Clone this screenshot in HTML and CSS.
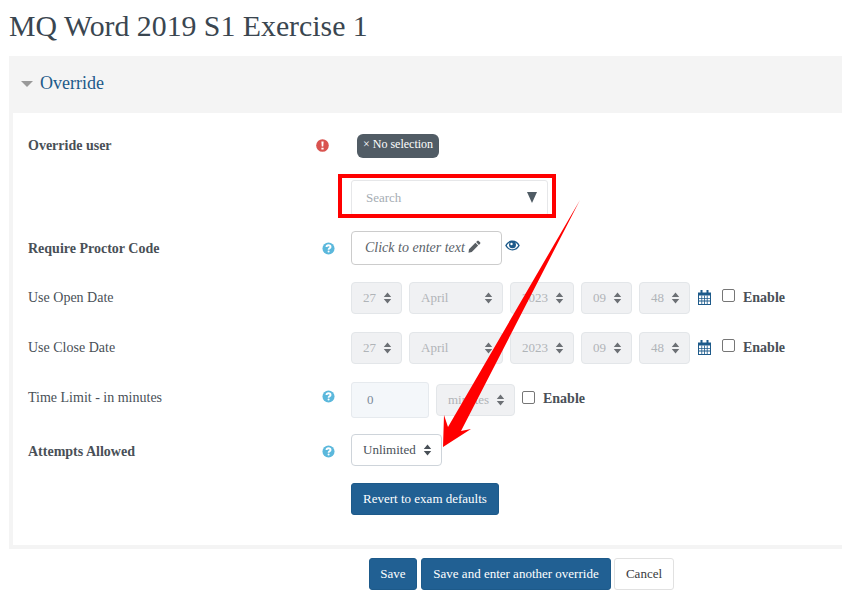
FILE: index.html
```html
<!DOCTYPE html>
<html lang="en">
<head>
<meta charset="utf-8">
<title>MQ Word 2019 S1 Exercise 1</title>
<link rel="stylesheet" href="styles.css">
</head>
<body>
<svg class="defs" aria-hidden="true">
  <symbol id="sort" viewBox="0 0 9 12"><path d="M.8 5 4.500.5 8.200 5zM.8 7h7.400l-3.700 4.500z"/></symbol>
  <symbol id="help" viewBox="0 0 14 14"><circle cx="7" cy="7" r="6.500"/><path class="glyph-line" d="M4.800 5.400c.1-1.300 1-1.900 2.200-1.900 1.300 0 2.200.8 2.200 1.800 0 1.500-2.100 1.600-2.100 3"/><circle class="glyph" cx="7.100" cy="10.300" r="1.100"/></symbol>
  <symbol id="cal" viewBox="0 0 13 15"><path d="M0 2.500h13V15H0z"/><path class="glyph" d="M1 5.500h11V14H1z"/><path d="M1 8h11v.8H1zM1 10.600h11v.8H1zM3.400 5.500h.8V14h-.8zM6.100 5.500h.8V14h-.8zM8.800 5.500h.8V14h-.8z"/><path d="M2.500 0h2v4h-2zM8.500 0h2v4h-2z"/></symbol>
</svg>

<h2 class="page-title">MQ Word 2019 S1 Exercise 1</h2>

<section class="panel">
  <header class="panel-head">
    <span class="caret"></span>
    <span class="panel-title">Override</span>
  </header>
  <div class="panel-body">
    <div class="row row-user">
      <div class="label strong">Override user</div>
      <div class="hint hint-error">
        <svg class="icon-error" width="13" height="13" viewBox="0 0 14 14"><circle cx="7" cy="7" r="6.800"/><path class="glyph" d="M5.800 2.800h2.400l-.4 5.400H6.200zM5.800 9.300h2.400v2.100H5.800z"/></svg>
      </div>
      <div class="controls"><span class="pill">× No selection</span></div>
    </div>

    <div class="row row-search">
      <div class="label"></div>
      <div class="hint"></div>
      <div class="controls">
        <div class="search"><span>Search</span><i class="search-arrow"></i></div>
      </div>
    </div>

    <div class="row row-proctor">
      <div class="label strong">Require Proctor Code</div>
      <div class="hint"><svg class="icon-help"><use href="#help"/></svg></div>
      <div class="controls">
        <div class="inplace">Click to enter text
          <svg class="icon-pencil" width="13" height="13" viewBox="0 0 13 13"><path d="M9.300.9a1 1 0 0 1 1.400 0l1.400 1.400a1 1 0 0 1 0 1.400l-1.200 1.200-2.800-2.800zM7.400 2.800l2.800 2.800-6.400 6.400-3.300.7.500-3.500z"/></svg>
        </div>
        <svg class="icon-eye" width="15" height="11" viewBox="0 0 15 11"><path fill-rule="evenodd" d="M.2 5.500C1.700 2.300 4.400.6 7.500.6s5.800 1.700 7.300 4.900c-1.500 3.200-4.200 4.900-7.300 4.900S1.700 8.700.2 5.500zm1.600 0C3.100 7.800 5.100 9.300 7.500 9.300s4.400-1.500 5.700-3.800C12.400 4 11.300 3 10.200 2.400c.5.700.8 1.500.8 2.400a3.500 3.500 0 0 1-7 0c0-.9.300-1.700.8-2.400C3.700 3 2.600 4 1.800 5.500z"/><circle cx="6.500" cy="4" r="1.200" fill="#fff"/></svg>
      </div>
    </div>

    <div class="row row-date">
      <div class="label">Use Open Date</div>
      <div class="hint"></div>
      <div class="controls date">
        <div class="select off w-day">27<svg class="sort"><use href="#sort"/></svg></div>
        <div class="select off w-month">April<svg class="sort"><use href="#sort"/></svg></div>
        <div class="select off w-year">2023<svg class="sort"><use href="#sort"/></svg></div>
        <div class="select off w-day">09<svg class="sort"><use href="#sort"/></svg></div>
        <div class="select off w-day">48<svg class="sort"><use href="#sort"/></svg></div>
        <svg class="icon-cal"><use href="#cal"/></svg>
        <span class="check"></span><span class="enable">Enable</span>
      </div>
    </div>

    <div class="row row-date">
      <div class="label">Use Close Date</div>
      <div class="hint"></div>
      <div class="controls date">
        <div class="select off w-day">27<svg class="sort"><use href="#sort"/></svg></div>
        <div class="select off w-month">April<svg class="sort"><use href="#sort"/></svg></div>
        <div class="select off w-year">2023<svg class="sort"><use href="#sort"/></svg></div>
        <div class="select off w-day">09<svg class="sort"><use href="#sort"/></svg></div>
        <div class="select off w-day">48<svg class="sort"><use href="#sort"/></svg></div>
        <svg class="icon-cal"><use href="#cal"/></svg>
        <span class="check"></span><span class="enable">Enable</span>
      </div>
    </div>

    <div class="row row-time">
      <div class="label">Time Limit - in minutes</div>
      <div class="hint"><svg class="icon-help"><use href="#help"/></svg></div>
      <div class="controls date">
        <div class="num">0</div>
        <div class="select off w-unit">minutes<svg class="sort"><use href="#sort"/></svg></div>
        <span class="check check-time"></span><span class="enable enable-time">Enable</span>
      </div>
    </div>

    <div class="row row-attempts">
      <div class="label strong">Attempts Allowed</div>
      <div class="hint"><svg class="icon-help"><use href="#help"/></svg></div>
      <div class="controls">
        <div class="select w-attempts">Unlimited<svg class="sort"><use href="#sort"/></svg></div>
      </div>
    </div>

    <div class="row row-revert">
      <div class="label"></div>
      <div class="hint"></div>
      <div class="controls"><button class="btn primary revert" type="button">Revert to exam defaults</button></div>
    </div>
  </div>
</section>

<footer class="actions">
  <button class="btn primary" type="button">Save</button>
  <button class="btn primary" type="button">Save and enter another override</button>
  <button class="btn plain" type="button">Cancel</button>
</footer>

<div class="callout-box"></div>
<svg class="callout-arrow" width="842" height="595" viewBox="0 0 842 595" aria-hidden="true">
  <path d="M580 200 461 431 471 429 443 447 444 415 448 427z"/>
</svg>
</body>
</html>
```
FILE: styles.css
```css
* { box-sizing: border-box; }
html, body { margin: 0; padding: 0; }
body {
  position: relative;
  width: 842px;
  height: 595px;
  overflow: hidden;
  background: #fff;
  color: #495057;
  font-family: "Liberation Serif", "Times New Roman", serif;
  font-size: 14px;
}
.defs { position: absolute; width: 0; height: 0; }
.glyph { fill: #fff; }
.glyph-line { fill: none; stroke: #fff; stroke-width: 2; }

.page-title {
  margin: 0;
  padding: 9px 0 0 9px;
  height: 56px;
  font-size: 29.800px;
  line-height: 34px;
  font-weight: 400;
  color: #3a4650;
}

.panel {
  margin-left: 9px;
  height: 493px;
  background: #f4f4f4;
  padding: 0 0 4px 4px;
  display: flex;
  flex-direction: column;
}
.panel-head {
  height: 57px;
  display: flex;
  align-items: center;
  padding-left: 8px;
  gap: 7px;
  flex: none;
}
.caret {
  width: 0;
  height: 0;
  border-left: 6px solid transparent;
  border-right: 6px solid transparent;
  border-top: 6px solid #999;
  margin-top: -1px;
}
.panel-title { font-size: 18px; line-height: 20px; margin-top: -3px; color: #1d5a8a; }
.panel-body { flex: 1; background: #fff; padding-left: 15px; }

.row { display: flex; }
.label { width: 288px; flex: none; color: #495057; }
.strong { font-weight: 700; }
.hint { width: 35px; flex: none; padding-left: 6px; line-height: 0; }
.hint-error { padding-left: 0; }
.controls { display: flex; align-items: flex-start; }

.row-user { height: 67px; padding-top: 21px; }
.row-user .label { line-height: 24px; }
.row-user .hint { padding-top: 5px; }
.row-user .controls { padding-left: 6px; }
.pill {
  width: 82px;
  height: 24px;
  border-radius: 6px;
  background: #515c65;
  color: #fff;
  font-size: 12px;
  line-height: 21px;
  padding-left: 6px;
  white-space: nowrap;
}
.row-search { height: 51px; }
.search {
  width: 197px;
  height: 36px;
  border: 1px solid #e6e7e9;
  border-radius: 3px;
  padding: 0 10px 0 14px;
  color: #a6adb4;
  font-size: 13px;
  display: flex;
  align-items: center;
  justify-content: space-between;
}
.search-arrow {
  width: 0;
  height: 0;
  border-left: 5.500px solid transparent;
  border-right: 5.500px solid transparent;
  border-top: 11px solid #4f5b64;
  margin-top: -2px;
}
.row-proctor { height: 51px; }
.row-proctor .label { line-height: 36px; }
.row-proctor .hint { padding-top: 11px; }
.inplace {
  width: 151px;
  height: 34px;
  border: 1px solid #ccc;
  border-radius: 4px;
  padding-left: 13px;
  font-style: italic;
  line-height: 31px;
  color: #5a6268;
  white-space: nowrap;
}
.icon-pencil { fill: #595f64; vertical-align: -1px; }
.icon-eye { fill: #1d5a8a; margin: 9px 0 0 3px; }
.icon-help { width: 13px; height: 13px; fill: #5bb8dc; }
.icon-error { fill: #d9534f; }

.row-date { height: 50px; }
.row-date .label { line-height: 31px; }
.date { gap: 7px; }
.select {
  height: 32px;
  border: 1px solid #ced4da;
  border-radius: 4px;
  background: #fff;
  padding: 0 9px 1px 11px;
  font-size: 13px;
  line-height: 28px;
  display: flex;
  justify-content: space-between;
  align-items: center;
  white-space: nowrap;
}
.off {
  background: #f0f1f3;
  border-color: #e3e6e9;
  color: #b0b4b8;
}
.sort { width: 9px; height: 12px; fill: #495057; flex: none; margin-top: 1px; }
.off .sort { fill: #6c7075; }
.w-day { width: 51px; }
.w-month { width: 94px; }
.w-year { width: 64px; }
.w-unit { width: 79px; margin-top: 2px; }
.w-attempts { width: 91px; }
.icon-cal { width: 13px; height: 15px; fill: #1d5a8a; margin: 8px 0 0 1px; }
.check {
  width: 13px;
  height: 13px;
  border: 1px solid #767676;
  border-radius: 2px;
  background: #fff;
  margin: 7px -1px 0 4px;
  flex: none;
}
.check-time { margin: 9px -1px 0 0; }
.enable {
  font-weight: 700;
  color: #495057;
  line-height: 31px;
  margin-left: 2px;
}
.enable-time { line-height: 34px; margin-left: 2px; }

.row-time { height: 52px; }
.row-time .label { line-height: 31px; }
.row-time .hint { padding-top: 8px; }
.num {
  width: 78px;
  height: 36px;
  border: 1px solid #e6eaee;
  border-radius: 3px;
  background: #f4f7fa;
  color: #7b8a99;
  font-size: 13px;
  line-height: 34px;
  padding-left: 15px;
}
.row-attempts { height: 49px; }
.row-attempts .label { line-height: 36px; }
.row-attempts .hint { padding-top: 11px; }
.btn {
  font-family: inherit;
  font-size: 13px;
  height: 32px;
  padding: 0;
  border-radius: 3px;
  cursor: pointer;
}
.primary {
  background: #216093;
  border: 1px solid #1d5a8a;
  color: #fff;
}
.plain {
  background: #fff;
  border: 1px solid #e1e1e1;
  color: #373a3c;
}
.revert { width: 148px; }

.actions {
  display: flex;
  padding: 9px 0 0 369px;
  gap: 4px;
}
.actions .btn:nth-child(1) { width: 48px; }
.actions .btn:nth-child(2) { width: 190px; }
.actions .btn:nth-child(3) { width: 60px; margin-left: -1px; }

.callout-box {
  position: absolute;
  left: 338px;
  top: 174px;
  width: 218px;
  height: 44px;
  border: 4px solid #ff0000;
}
.callout-arrow {
  position: absolute;
  left: 0;
  top: 0;
  fill: #ff0000;
  pointer-events: none;
}
```
